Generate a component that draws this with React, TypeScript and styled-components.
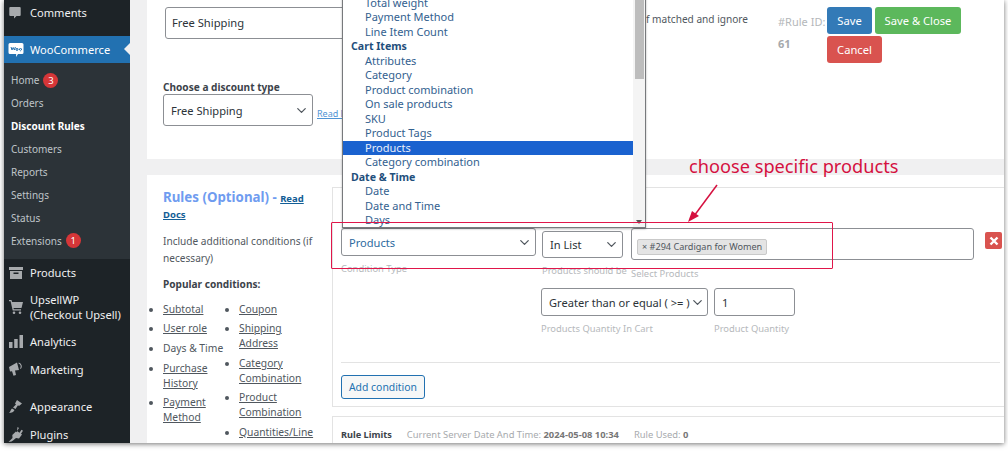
import styled, { createGlobalStyle } from "styled-components";
import { ChevronDown } from "lucide-react";

const FONT = `"Noto Sans", "Open Sans", sans-serif`;

const GlobalStyle = createGlobalStyle`
  html, body {
    margin: 0;
    background: #fff;
    font-family: ${FONT};
    overflow: hidden;
  }
  * { box-sizing: border-box; }
`;

const Page = styled.div`
  width: 1008px;
  height: 453px;
  padding: 0 4px 10px 4px;
`;

const Window = styled.div`
  position: relative;
  width: 1000px;
  height: 443px;
  display: flex;
  overflow: hidden;
  background: #f0f0f1;
  box-shadow: 0 1px 5px rgba(0, 0, 0, 0.55);
`;

const Sidebar = styled.nav`
  width: 126px;
  flex: none;
  background: #1d2327;
  color: #f0f0f1;
  display: flex;
  flex-direction: column;
`;

const MenuItem = styled.div<{ $h: number; $active?: boolean; $mt?: number; $pb?: number }>`
  position: relative;
  flex: none;
  height: ${(p) => p.$h}px;
  margin-top: ${(p) => p.$mt ?? 0}px;
  padding: 0 0 ${(p) => p.$pb ?? 0}px 4px;
  display: flex;
  align-items: center;
  gap: 6px;
  font-size: 11.1px;
  line-height: 15px;
  white-space: nowrap;
  background: ${(p) => (p.$active ? "#2271b1" : "transparent")};
  color: ${(p) => (p.$active ? "#fff" : "#f0f0f1")};
  svg { flex: none; }
  ${(p) =>
    p.$active &&
    `&::after {
      content: "";
      position: absolute;
      right: 0;
      top: 7px;
      border: 6.5px solid transparent;
      border-right-color: #f0f0f1;
      border-left: 0;
    }`}
`;

const Submenu = styled.div`
  flex: none;
  background: #2c3338;
  padding: 6px 0 7px 7px;
  display: flex;
  flex-direction: column;
`;

const SubItem = styled.div<{ $on?: boolean }>`
  height: 22.9px;
  display: flex;
  align-items: center;
  gap: 4px;
  font-size: 10px;
  color: ${(p) => (p.$on ? "#fff" : "#bfc4c8")};
  font-weight: ${(p) => (p.$on ? 700 : 400)};
`;

const Badge = styled.span`
  width: 15px;
  height: 15px;
  border-radius: 50%;
  background: #d63638;
  color: #fff;
  font-size: 9.5px;
  display: inline-flex;
  align-items: center;
  justify-content: center;
`;

const Main = styled.main`
  flex: 1;
  min-width: 0;
  padding-left: 17px;
  display: flex;
  flex-direction: column;
  gap: 16px;
  color: #50575e;
`;

const TopCard = styled.section`
  height: 159px;
  flex: none;
  background: #fff;
  padding: 7px 0 0 16px;
`;

const TopRow = styled.div`
  display: flex;
  align-items: flex-start;
`;

const NameInput = styled.div`
  width: 300px;
  height: 32px;
  margin-left: 2px;
  padding: 0 0 1px 6px;
  border: 1px solid #8c8f94;
  border-radius: 3px;
  font-size: 11.2px;
  color: #2c3338;
  display: flex;
  align-items: center;
`;

const IgnoreNote = styled.div`
  width: 283px;
  margin-top: 5px;
  font-size: 10.1px;
  white-space: nowrap;
  text-align: right;
  color: #50575e;
`;

const RuleId = styled.div`
  width: 49px;
  margin-left: 30px;
  padding-top: 7px;
  font-size: 11px;
  color: #b4b7ba;
  white-space: nowrap;
  b {
    display: block;
    margin-top: 7px;
    font-weight: 700;
    color: #a6a9ac;
  }
`;

const Actions = styled.div`
  width: 140px;
  display: flex;
  flex-wrap: wrap;
  gap: 2px 3px;
`;

const ActionButton = styled.div<{ $bg: string; $w: number }>`
  width: ${(p) => p.$w}px;
  height: 27px;
  background: ${(p) => p.$bg};
  border-radius: 3px;
  color: #fff;
  font-size: 11.2px;
  display: flex;
  align-items: center;
  justify-content: center;
`;

const FieldLabel = styled.label`
  display: block;
  margin: 17px 0 0 0;
  font-size: 10.1px;
  line-height: 14px;
  font-weight: 700;
  color: #3c434a;
`;

const TypeRow = styled.div`
  display: flex;
  align-items: flex-end;
  gap: 4px;
`;

const Select = styled.div<{ $w: number; $h?: number; $blue?: boolean; $mt?: number }>`
  width: ${(p) => p.$w}px;
  height: ${(p) => p.$h ?? 28}px;
  margin-top: ${(p) => p.$mt ?? 0}px;
  flex: none;
  padding: 0 3px 0 7px;
  background: #fff;
  border: 1px solid #8c8f94;
  border-radius: 3px;
  font-size: 11.1px;
  color: ${(p) => (p.$blue ? "#2d6aa0" : "#2c3338")};
  display: flex;
  align-items: center;
  justify-content: space-between;
  white-space: nowrap;
  svg { flex: none; color: #50575e; }
`;

const SmallLink = styled.a`
  margin-bottom: 6px;
  font-size: 9px;
  color: #4f94d4;
  text-decoration: underline;
  white-space: nowrap;
`;

const RulesCard = styled.section`
  flex: 1;
  min-height: 0;
  background: #fff;
  padding: 12px 0 0 16px;
  display: flex;
`;

const RulesInfo = styled.aside`
  width: 169px;
  flex: none;
  padding-top: 3px;
  font-size: 10.3px;
  line-height: 16.5px;
`;

const RulesTitle = styled.h2`
  margin: 0 0 11px;
  font-size: 13.3px;
  line-height: 15px;
  font-weight: 700;
  color: #6f9cf0;
  width: 156px;
  a {
    font-size: 9.5px;
    color: #135e96;
    text-decoration: underline;
  }
`;

const InfoText = styled.p`
  margin: 0 0 10px;
  width: 160px;
  font-size: 10.1px;
`;

const PopularHeading = styled.p`
  margin: 0 0 9px;
  font-size: 10.1px;
  font-weight: 700;
  color: #3c434a;
`;

const ListColumns = styled.div`
  display: flex;
`;

const ConditionList = styled.ul<{ $w: number }>`
  width: ${(p) => p.$w}px;
  flex: none;
  margin: 0;
  padding: 0;
  list-style: disc;
  line-height: 14.7px;
  li { margin-bottom: 5.1px; }
  a { color: #50575e; text-decoration: underline; }
`;

const RulesBody = styled.div`
  flex: 1;
  min-width: 0;
  display: flex;
  flex-direction: column;
  gap: 9px;
`;

const RuleBox = styled.div`
  height: 220px;
  flex: none;
  border: 1px solid #e3e3e3;
  border-right: 0;
  padding: 40px 0 0 8px;
`;

const ConditionRow = styled.div`
  display: flex;
  align-items: flex-start;
`;

const FieldColumn = styled.div<{ $w: number; $mr: number }>`
  width: ${(p) => p.$w}px;
  flex: none;
  margin-right: ${(p) => p.$mr}px;
`;

const Hint = styled.div<{ $mt?: number }>`
  margin-top: ${(p) => p.$mt ?? 6}px;
  font-size: 9.4px;
  line-height: 14px;
  color: #b6b9bc;
  white-space: nowrap;
`;

const MultiBox = styled.div`
  width: 343px;
  height: 32px;
  padding: 4px 5px;
  border: 1px solid #8c8f94;
  border-radius: 3px;
`;

const Tag = styled.span`
  display: inline-block;
  height: 16px;
  padding: 0 4px;
  background: #e4e4e4;
  border: 1px solid #c9c9c9;
  border-radius: 2px;
  font-size: 9.1px;
  line-height: 14px;
  color: #50575e;
  white-space: nowrap;
`;

const DeleteButton = styled.div`
  width: 17px;
  height: 17px;
  margin: 4px 0 0 11px;
  flex: none;
  background: #d9534f;
  border-radius: 2px;
  display: flex;
  align-items: center;
  justify-content: center;
`;

const QuantityRow = styled.div`
  display: flex;
  gap: 6px;
  margin: 7px 0 0 200px;
`;

const QuantityInput = styled.div`
  width: 81px;
  height: 28px;
  padding-left: 7px;
  border: 1px solid #8c8f94;
  border-radius: 3px;
  font-size: 11.1px;
  color: #2c3338;
  display: flex;
  align-items: center;
`;

const Divider = styled.hr`
  width: 659px;
  margin: 26px 0 12px;
  border: 0;
  border-top: 1px solid #e3e3e3;
`;

const AddButton = styled.div`
  width: 84px;
  height: 24px;
  border: 1px solid #2271b1;
  border-radius: 3px;
  background: #f6f7f7;
  color: #2271b1;
  font-size: 10.4px;
  display: flex;
  align-items: center;
  justify-content: center;
`;

const LimitBox = styled.div`
  flex: 1;
  border: 1px solid #e3e3e3;
  border-right: 0;
  border-bottom: 0;
  padding: 8px 8px 0;
  display: flex;
  align-items: center;
  gap: 15px;
  font-size: 9.4px;
  color: #a7aaad;
  b { font-weight: 700; color: #777; }
  strong { font-size: 9.2px; color: #3c434a; }
`;

const Popup = styled.div`
  position: absolute;
  left: 338px;
  top: -4px;
  width: 304px;
  height: 232px;
  background: #fff;
  border: 1px solid #77797c;
  border-top: 0;
  box-shadow: 0 1px 2px rgba(0, 0, 0, 0.3);
  display: flex;
  overflow: hidden;
`;

const PopupList = styled.div`
  flex: 1;
  min-width: 0;
  font-size: 11px;
  color: #33618f;
`;

const Option = styled.div<{ $selected?: boolean }>`
  height: 14.47px;
  line-height: 14.47px;
  padding-left: 22px;
  white-space: nowrap;
  background: ${(p) => (p.$selected ? "#1a62cf" : "transparent")};
  color: ${(p) => (p.$selected ? "#e8eefa" : "inherit")};
`;

const OptGroup = styled.div`
  height: 14.47px;
  line-height: 14.47px;
  padding-left: 8px;
  font-size: 10.6px;
  font-weight: 700;
  color: #1f4f7c;
`;

const ScrollTrack = styled.div`
  position: relative;
  width: 12px;
  flex: none;
  background: #f4f4f4;
  &::before {
    content: "";
    position: absolute;
    left: 2px;
    right: 1px;
    top: 0;
    height: 83px;
    background: #bdbdbd;
  }
  &::after {
    content: "";
    position: absolute;
    left: 3px;
    bottom: 3px;
    border: 3px solid transparent;
    border-top: 4px solid #555;
    border-bottom: 0;
  }
`;

const CalloutText = styled.div`
  position: absolute;
  left: 685px;
  top: 153px;
  font-size: 18.2px;
  line-height: 26px;
  color: #d5103f;
  white-space: nowrap;
`;

const CalloutBox = styled.div`
  position: absolute;
  left: 327px;
  top: 222px;
  width: 502px;
  height: 47px;
  border: 1.5px solid #e0164a;
  border-radius: 1px;
  pointer-events: none;
`;

const CalloutArrow = styled.svg`
  position: absolute;
  left: 680px;
  top: 182px;
`;

const CommentsIcon = () => (
  <svg width="16" height="16" viewBox="0 0 16 16" fill="#a7aaad">
    <path d="M2.300 2h9.400a1 1 0 0 1 1 1v7a1 1 0 0 1-1 1H8.500L6 13.500V11H2.300a1 1 0 0 1-1-1V3a1 1 0 0 1 1-1z" />
  </svg>
);

const WooIcon = () => (
  <svg width="16" height="16" viewBox="0 0 16 16">
    <path d="M2 1h12a1.500 1.500 0 0 1 1.500 1.500v8A1.500 1.500 0 0 1 14 12h-4l-2 3 .2-3H2A1.500 1.500 0 0 1 .5 10.500v-8A1.500 1.500 0 0 1 2 1z" fill="#fff" />
    <path d="M3 5l1 3 1.200-2.500L6.400 8l1-3M9 6.500a1 1 0 1 0 .01 0M12.500 6.500a1 1 0 1 0 .01 0" fill="none" stroke="#2271b1" strokeWidth="1" />
  </svg>
);

const ProductsIcon = () => (
  <svg width="16" height="14" viewBox="0 0 16 14" fill="#a7aaad">
    <path d="M1 1h14v3H1zM2 5h12v8H2zM5.500 6.500v1.500h5V6.500z" fillRule="evenodd" />
  </svg>
);

const CartIcon = () => (
  <svg width="16" height="16" viewBox="0 0 16 16" fill="#a7aaad">
    <path d="M1 1h2.500l.6 2H15l-1.500 6H5.500l.3 1.300H13v1.200H4.700L2.600 2.300H1z" />
    <circle cx="6" cy="13.700" r="1.300" />
    <circle cx="12" cy="13.700" r="1.300" />
  </svg>
);

const ChartIcon = () => (
  <svg width="16" height="15" viewBox="0 0 16 15" fill="#a7aaad">
    <path d="M1 8h3.500v6H1zM6.200 5h3.500v9H6.200zM11.500 1H15v13h-3.500z" />
  </svg>
);

const MegaphoneIcon = () => (
  <svg width="16" height="16" viewBox="0 0 16 16" fill="#a7aaad">
    <path d="M1 6l8-4.500 2 7.500-4 .6 1 4.400-2.500.8L4 10.300l-2 .3z" />
    <path d="M10.800 1.500a4 4 0 0 1 2 6.500l-.8-.7a3 3 0 0 0-1.500-4.800z" />
  </svg>
);

const BrushIcon = () => (
  <svg width="16" height="16" viewBox="0 0 16 16" fill="#a7aaad">
    <path d="M9 2l5 3.500-3 2.500-1-.7-2.500 3.700-2.500-1.500L8 6.500 7 5.500z" />
    <path d="M4 10.500l2.500 1.600C6 14 3.500 15 1 15c1.500-1.200 1.500-3.200 3-4.500z" />
  </svg>
);

const PlugIcon = () => (
  <svg width="16" height="16" viewBox="0 0 16 16" fill="#a7aaad">
    <path d="M9.500 1l1.500 1-2 3 2.500 1.700 2-3 1.500 1-2 3 1 .8-3 4-3-.5-3 2.500-1.500 1-3 .5 4-4-.2-3 3.600-3.500 1 .8z" />
  </svg>
);

const submenu = ["Orders", "Discount Rules", "Customers", "Reports", "Settings", "Status"];

const cartItems = [
  "Attributes",
  "Category",
  "Product combination",
  "On sale products",
  "SKU",
  "Product Tags",
];

export default function App() {
  return (
    <Page>
      <GlobalStyle />
      <Window>
        <Sidebar>
          <MenuItem $h={36} $pb={11}>
            <CommentsIcon />
            Comments
          </MenuItem>
          <MenuItem $h={27} $active>
            <WooIcon />
            WooCommerce
          </MenuItem>
          <Submenu>
            <SubItem>
              Home <Badge>3</Badge>
            </SubItem>
            {submenu.map((item) => (
              <SubItem key={item} $on={item === "Discount Rules"}>
                {item}
              </SubItem>
            ))}
            <SubItem>
              Extensions <Badge>1</Badge>
            </SubItem>
          </Submenu>
          <MenuItem $h={27}>
            <ProductsIcon />
            Products
          </MenuItem>
          <MenuItem $h={42}>
            <CartIcon />
            <span>
              UpsellWP
              <br />
              (Checkout Upsell)
            </span>
          </MenuItem>
          <MenuItem $h={27}>
            <ChartIcon />
            Analytics
          </MenuItem>
          <MenuItem $h={28}>
            <MegaphoneIcon />
            Marketing
          </MenuItem>
          <MenuItem $h={28} $mt={9}>
            <BrushIcon />
            Appearance
          </MenuItem>
          <MenuItem $h={28}>
            <PlugIcon />
            Plugins
          </MenuItem>
        </Sidebar>

        <Main>
          <TopCard>
            <TopRow>
              <NameInput>Free Shipping</NameInput>
              <IgnoreNote>Ignore other rules if matched and ignore</IgnoreNote>
              <RuleId>
                #Rule ID:
                <b>61</b>
              </RuleId>
              <Actions>
                <ActionButton $bg="#337ab7" $w={45}>Save</ActionButton>
                <ActionButton $bg="#5cb85c" $w={86}>Save &amp; Close</ActionButton>
                <ActionButton $bg="#d9534f" $w={55}>Cancel</ActionButton>
              </Actions>
            </TopRow>
            <FieldLabel>Choose a discount type</FieldLabel>
            <TypeRow>
              <Select $w={150} $h={32}>
                Free Shipping
                <ChevronDown size={15} />
              </Select>
              <SmallLink>Read Docs</SmallLink>
            </TypeRow>
          </TopCard>

          <RulesCard>
            <RulesInfo>
              <RulesTitle>
                Rules (Optional) - <a>Read Docs</a>
              </RulesTitle>
              <InfoText>
                Include additional conditions (if
                <br />
                necessary)
              </InfoText>
              <PopularHeading>Popular conditions:</PopularHeading>
              <ListColumns>
                <ConditionList $w={76}>
                  <li><a>Subtotal</a></li>
                  <li><a>User role</a></li>
                  <li>Days &amp; Time</li>
                  <li><a>Purchase History</a></li>
                  <li><a>Payment Method</a></li>
                </ConditionList>
                <ConditionList $w={72}>
                  <li><a>Coupon</a></li>
                  <li><a>Shipping Address</a></li>
                  <li><a>Category Combination</a></li>
                  <li><a>Product Combination</a></li>
                  <li><a>Quantities/Line Items</a></li>
                </ConditionList>
              </ListColumns>
            </RulesInfo>

            <RulesBody>
              <RuleBox>
                <ConditionRow>
                  <FieldColumn $w={195} $mr={6}>
                    <Select $w={195} $blue>
                      Products
                      <ChevronDown size={15} />
                    </Select>
                    <Hint>Condition Type</Hint>
                  </FieldColumn>
                  <FieldColumn $w={81} $mr={8}>
                    <Select $w={81} $h={27} $mt={3}>
                      In List
                      <ChevronDown size={15} />
                    </Select>
                    <Hint>Products should be</Hint>
                  </FieldColumn>
                  <FieldColumn $w={343} $mr={0}>
                    <MultiBox>
                      <Tag>× #294 Cardigan for Women</Tag>
                    </MultiBox>
                    <Hint $mt={7}>Select Products</Hint>
                  </FieldColumn>
                  <DeleteButton>
                    <svg width="10" height="10" viewBox="0 0 10 10">
                      <path d="M1.500 1.500l7 7M8.500 1.500l-7 7" stroke="#fff" strokeWidth="2.400" />
                    </svg>
                  </DeleteButton>
                </ConditionRow>
                <QuantityRow>
                  <div>
                    <Select $w={167}>
                      Greater than or equal ( &gt;= )
                      <ChevronDown size={15} />
                    </Select>
                    <Hint>Products Quantity In Cart</Hint>
                  </div>
                  <div>
                    <QuantityInput>1</QuantityInput>
                    <Hint>Product Quantity</Hint>
                  </div>
                </QuantityRow>
                <Divider />
                <AddButton>Add condition</AddButton>
              </RuleBox>
              <LimitBox>
                <strong>Rule Limits</strong>
                <span>
                  Current Server Date And Time: <b>2024-05-08 10:34</b>
                </span>
                <span>
                  Rule Used: <b>0</b>
                </span>
              </LimitBox>
            </RulesBody>
          </RulesCard>
        </Main>

        <Popup>
          <PopupList>
            <Option>Total weight</Option>
            <Option>Payment Method</Option>
            <Option>Line Item Count</Option>
            <OptGroup>Cart Items</OptGroup>
            {cartItems.map((item) => (
              <Option key={item}>{item}</Option>
            ))}
            <Option $selected>Products</Option>
            <Option>Category combination</Option>
            <OptGroup>Date &amp; Time</OptGroup>
            <Option>Date</Option>
            <Option>Date and Time</Option>
            <Option>Days</Option>
          </PopupList>
          <ScrollTrack />
        </Popup>

        <CalloutText>choose specific products</CalloutText>
        <CalloutBox />
        <CalloutArrow width="44" height="44" viewBox="0 0 44 44">
          <path d="M33 3L10 34" stroke="#d5103f" strokeWidth="1.500" fill="none" />
          <path d="M4 40l4-11 7 5z" fill="#d5103f" />
        </CalloutArrow>
      </Window>
    </Page>
  );
}
